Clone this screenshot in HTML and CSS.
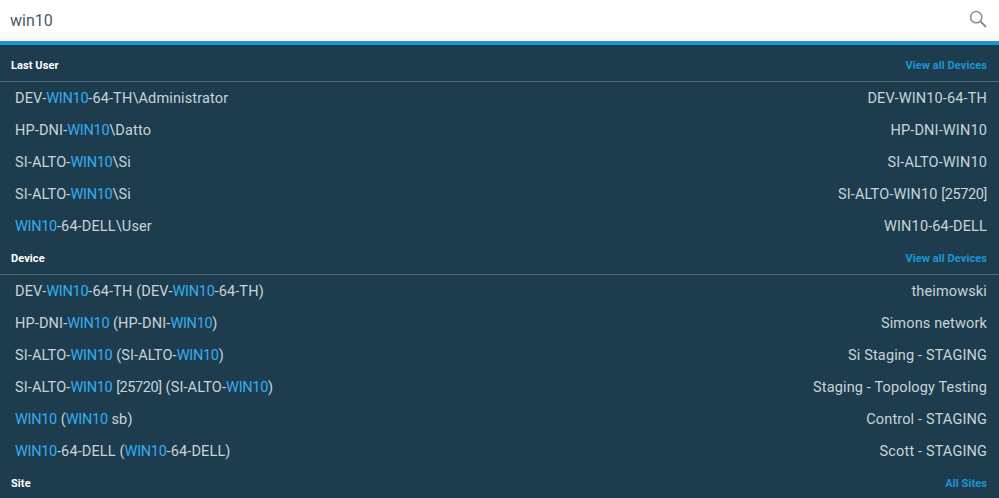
FILE: index.html
```html
<!DOCTYPE html>
<html lang="en">
<head>
<meta charset="utf-8">
<title>Search</title>
<link rel="stylesheet" href="styles.css">
</head>
<body>
<div class="search">
  <span class="query">win10</span>
  <svg class="search-icon" width="18" height="18" viewBox="0 0 18 18" fill="none" stroke="#8c8c8c"><circle cx="7.2" cy="7.2" r="5.6" stroke-width="1.5"/><path d="M11.4 11.4L17 17" stroke-width="2"/></svg>
</div>
<div class="results">
  <div class="head"><span class="title">Last User</span><a class="all">View all Devices</a></div>
  <ul class="list">
    <li class="row"><span>DEV-<b>WIN10</b>-64-TH\Administrator</span><span>DEV-WIN10-64-TH</span></li>
    <li class="row"><span>HP-DNI-<b>WIN10</b>\Datto</span><span>HP-DNI-WIN10</span></li>
    <li class="row"><span>SI-ALTO-<b>WIN10</b>\Si</span><span>SI-ALTO-WIN10</span></li>
    <li class="row"><span>SI-ALTO-<b>WIN10</b>\Si</span><span>SI-ALTO-WIN10 <i class="num">[25720]</i></span></li>
    <li class="row"><span><b>WIN10</b>-64-DELL\User</span><span>WIN10-64-DELL</span></li>
  </ul>
  <div class="head"><span class="title">Device</span><a class="all">View all Devices</a></div>
  <ul class="list">
    <li class="row"><span>DEV-<b>WIN10</b>-64-TH (DEV-<b>WIN10</b>-64-TH)</span><span>theimowski</span></li>
    <li class="row"><span>HP-DNI-<b>WIN10</b> (HP-DNI-<b>WIN10</b>)</span><span>Simons network</span></li>
    <li class="row"><span>SI-ALTO-<b>WIN10</b> (SI-ALTO-<b>WIN10</b>)</span><span>Si Staging - STAGING</span></li>
    <li class="row"><span>SI-ALTO-<b>WIN10</b> <i class="num">[25720]</i> (SI-ALTO-<b>WIN10</b>)</span><span>Staging - Topology Testing</span></li>
    <li class="row"><span><b>WIN10</b> (<b>WIN10</b> sb)</span><span>Control - STAGING</span></li>
    <li class="row"><span><b>WIN10</b>-64-DELL (<b>WIN10</b>-64-DELL)</span><span>Scott - STAGING</span></li>
  </ul>
  <div class="head head-last"><span class="title">Site</span><a class="all">All Sites</a></div>
</div>
</body>
</html>
```
FILE: styles.css
```css
html, body { margin: 0; padding: 0; height: 100%; overflow: hidden; }
body { background: #1d3d4f; font-family: Roboto, "Liberation Sans", sans-serif; }
.search {
  height: 41px; display: flex; align-items: center; justify-content: space-between;
  padding: 0 12px 0 10px; box-sizing: border-box;
  background: linear-gradient(#fff 70%, #f8f8f8);
}
.query { font-size: 16px; color: #4a5a66; }
.search-icon { margin-top: -4px; }
.results { border-top: 4px solid #1b95d3; padding-top: 4px; }
.head {
  height: 33px; box-sizing: border-box; display: flex; align-items: center; justify-content: space-between;
  padding: 0 12px 0 11px; border-bottom: 1px solid #4d6874;
}
.head-last { border-bottom: 0; }
.title { font-size: 11px; font-weight: 700; letter-spacing: .08px; color: #fff; }
.all { font-size: 11px; font-weight: 700; letter-spacing: .08px; color: #1b95d3; }
.list { list-style: none; margin: 0; padding: 0; }
.row {
  height: 32px; display: flex; align-items: center; justify-content: space-between;
  padding: 0 12px 0 15px; font-size: 14.5px; letter-spacing: .14px; color: #c9d3d8;
}
.row b { font-weight: 400; letter-spacing: -.3px; color: #35acf0; }
.num { font-style: normal; letter-spacing: -.4px; }
```
